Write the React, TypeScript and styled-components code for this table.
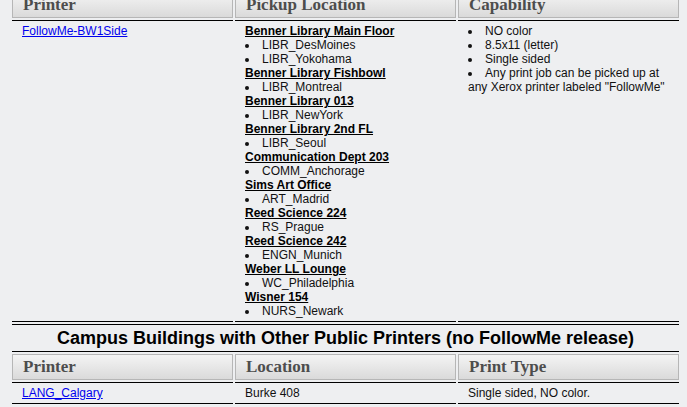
import styled, { createGlobalStyle } from 'styled-components';

interface Pickup {
  building: string;
  printers: string[];
}

const pickups: Pickup[] = [
  { building: 'Benner Library Main Floor', printers: ['LIBR_DesMoines', 'LIBR_Yokohama'] },
  { building: 'Benner Library Fishbowl', printers: ['LIBR_Montreal'] },
  { building: 'Benner Library 013', printers: ['LIBR_NewYork'] },
  { building: 'Benner Library 2nd FL', printers: ['LIBR_Seoul'] },
  { building: 'Communication Dept 203', printers: ['COMM_Anchorage'] },
  { building: 'Sims Art Office', printers: ['ART_Madrid'] },
  { building: 'Reed Science 224', printers: ['RS_Prague'] },
  { building: 'Reed Science 242', printers: ['ENGN_Munich'] },
  { building: 'Weber LL Lounge', printers: ['WC_Philadelphia'] },
  { building: 'Wisner 154', printers: ['NURS_Newark'] },
];

const capabilities = [
  'NO color',
  '8.5x11 (letter)',
  'Single sided',
  'Any print job can be picked up at any Xerox printer labeled "FollowMe"',
];

function App() {
  return (
    <>
      <GlobalStyle />
      <Page>
        <PrinterTable>
          <tbody>
            <tr>
              <HeadCell>Printer</HeadCell>
              <HeadCell>Pickup Location</HeadCell>
              <HeadCell>Capability</HeadCell>
            </tr>
            <tr>
              <BodyCell>
                <PrinterLink href="#">FollowMe-BW1Side</PrinterLink>
              </BodyCell>
              <BodyCell>
                {pickups.map((p) => (
                  <div key={p.building}>
                    <Building>{p.building}</Building>
                    <BulletList>
                      {p.printers.map((name) => (
                        <li key={name}>{name}</li>
                      ))}
                    </BulletList>
                  </div>
                ))}
              </BodyCell>
              <BodyCell>
                <BulletList>
                  {capabilities.map((c) => (
                    <li key={c}>{c}</li>
                  ))}
                </BulletList>
              </BodyCell>
            </tr>
            <tr>
              <SectionTitle colSpan={3}>
                Campus Buildings with Other Public Printers (no FollowMe release)
              </SectionTitle>
            </tr>
            <tr>
              <HeadCell>Printer</HeadCell>
              <HeadCell>Location</HeadCell>
              <HeadCell>Print Type</HeadCell>
            </tr>
            <tr>
              <BodyCell>
                <PrinterLink href="#">LANG_Calgary</PrinterLink>
              </BodyCell>
              <BodyCell>Burke 408</BodyCell>
              <BodyCell>Single sided, NO color.</BodyCell>
            </tr>
          </tbody>
        </PrinterTable>
      </Page>
    </>
  );
}

const GlobalStyle = createGlobalStyle`
  body {
    margin: 0;
    background-color: #eeeff1;
    font-family: 'Liberation Sans', Arial, sans-serif;
    color: #111;
  }
`;

const Page = styled.div`
  height: 407px;
  overflow: hidden;
  padding: 0 6px 0 10px;
`;

const PrinterTable = styled.table`
  width: 100%;
  margin-top: -10px;
  border-collapse: separate;
  border-spacing: 2px;
  table-layout: fixed;
`;

const HeadCell = styled.th`
  padding: 2px 10px;
  border: 1px solid #b6b6b6;
  background: linear-gradient(to bottom, #f4f4f4, #dadada);
  text-align: left;
  font-family: 'Liberation Serif', 'Times New Roman', serif;
  font-size: 17px;
  line-height: 20px;
  font-weight: bold;
  color: #4d4d4d;
`;

const BodyCell = styled.td`
  padding: 3px 10px;
  border-top: 1px solid #000;
  border-bottom: 1px solid #000;
  vertical-align: top;
  font-size: 12px;
  line-height: 14px;
`;

const SectionTitle = styled.td`
  padding: 3px 10px;
  border-top: 1px solid #000;
  border-bottom: 1px solid #000;
  text-align: center;
  font-size: 18px;
  line-height: 20px;
  font-weight: bold;
  color: #000;
`;

const PrinterLink = styled.a`
  color: #0000ee;
  text-decoration: underline;
`;

const Building = styled.span`
  font-weight: bold;
  text-decoration: underline;
  color: #000;
`;

const BulletList = styled.ul`
  margin: 0;
  padding: 0;
  list-style: disc inside;
`;

export default App;
